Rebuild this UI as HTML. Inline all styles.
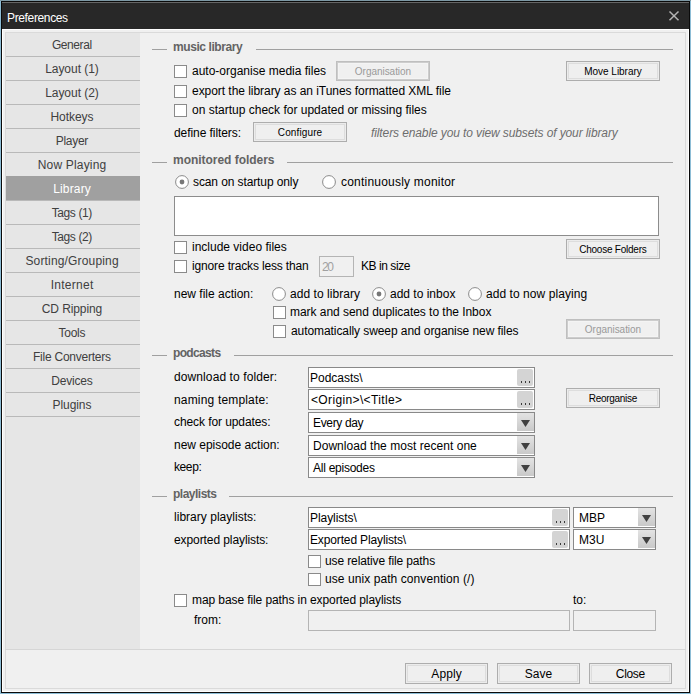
<!DOCTYPE html>
<html><head><meta charset="utf-8"><style>
html,body{margin:0;padding:0;width:691px;height:694px;overflow:hidden;}
body{position:relative;font-family:'Liberation Sans', sans-serif;}
body>div, body>svg{position:absolute;box-sizing:border-box;}
.t{white-space:pre;line-height:14px;font-family:'Liberation Sans', sans-serif;}
</style></head><body>
<div style="left:0px;top:0px;width:691px;height:694px;background:#8dbdd6;"></div>
<div style="left:0px;top:0px;width:691px;height:1px;background:#7d98a4;"></div>
<div style="left:1px;top:1px;width:689px;height:692px;background:#0a0a0a;"></div>
<div style="left:2px;top:2px;width:687px;height:27px;background:#282828;"></div>
<div style="left:2px;top:2px;width:687px;height:1px;background:#666;"></div>
<div style="left:2px;top:29px;width:687px;height:663px;background:#fff;"></div>
<div style="left:3px;top:30px;width:685px;height:661px;background:#f0f0f0;"></div>
<div style="left:5px;top:32px;width:681px;height:657px;box-shadow:inset 0 0 0 1px #dadada;"></div>
<div style="left:5px;top:649px;width:681px;height:1px;background:#d6d6d6;"></div>
<div class="t" style="left:7px;top:11px;font-size:12px;color:#fff;letter-spacing:-0.360px;">Preferences</div>
<svg style="position:absolute;left:668px;top:10px" width="12" height="12"><path d="M1.5 1.5L10.5 10.2M10.5 1.5L1.5 10.2" stroke="#b4b4b4" stroke-width="1.5"/></svg>
<div style="left:6px;top:33px;width:134px;height:616px;background:#e6e6e6;"></div>
<div style="left:6px;top:56px;width:134px;height:1px;background:#b9b9b9;"></div>
<div class="t" style="left:7px;width:130px;text-align:center;top:38px;font-size:12px;color:#404040;letter-spacing:-0.433px;text-indent:-0.433px;">General</div>
<div style="left:6px;top:80px;width:134px;height:1px;background:#b9b9b9;"></div>
<div class="t" style="left:7px;width:130px;text-align:center;top:62px;font-size:12px;color:#404040;letter-spacing:-0.033px;text-indent:-0.033px;">Layout (1)</div>
<div style="left:6px;top:104px;width:134px;height:1px;background:#b9b9b9;"></div>
<div class="t" style="left:7px;width:130px;text-align:center;top:86px;font-size:12px;color:#404040;letter-spacing:-0.033px;text-indent:-0.033px;">Layout (2)</div>
<div style="left:6px;top:128px;width:134px;height:1px;background:#b9b9b9;"></div>
<div class="t" style="left:7px;width:130px;text-align:center;top:110px;font-size:12px;color:#404040;letter-spacing:-0.067px;text-indent:-0.067px;">Hotkeys</div>
<div style="left:6px;top:152px;width:134px;height:1px;background:#b9b9b9;"></div>
<div class="t" style="left:7px;width:130px;text-align:center;top:134px;font-size:12px;color:#404040;letter-spacing:-0.260px;text-indent:-0.260px;">Player</div>
<div style="left:6px;top:176px;width:134px;height:1px;background:#b9b9b9;"></div>
<div class="t" style="left:7px;width:130px;text-align:center;top:158px;font-size:12px;color:#404040;letter-spacing:0.180px;text-indent:0.180px;">Now Playing</div>
<div style="left:6px;top:176px;width:134px;height:24px;background:#a0a0a0;"></div>
<div style="left:6px;top:200px;width:134px;height:1px;background:#b9b9b9;"></div>
<div class="t" style="left:7px;width:130px;text-align:center;top:182px;font-size:12px;color:#fff;letter-spacing:0.167px;text-indent:0.167px;">Library</div>
<div style="left:6px;top:224px;width:134px;height:1px;background:#b9b9b9;"></div>
<div class="t" style="left:7px;width:130px;text-align:center;top:206px;font-size:12px;color:#404040;letter-spacing:-0.386px;text-indent:-0.386px;">Tags (1)</div>
<div style="left:6px;top:248px;width:134px;height:1px;background:#b9b9b9;"></div>
<div class="t" style="left:7px;width:130px;text-align:center;top:230px;font-size:12px;color:#404040;letter-spacing:-0.386px;text-indent:-0.386px;">Tags (2)</div>
<div style="left:6px;top:272px;width:134px;height:1px;background:#b9b9b9;"></div>
<div class="t" style="left:7px;width:130px;text-align:center;top:254px;font-size:12px;color:#404040;letter-spacing:0.167px;text-indent:0.167px;">Sorting/Grouping</div>
<div style="left:6px;top:296px;width:134px;height:1px;background:#b9b9b9;"></div>
<div class="t" style="left:7px;width:130px;text-align:center;top:278px;font-size:12px;color:#404040;letter-spacing:0.286px;text-indent:0.286px;">Internet</div>
<div style="left:6px;top:320px;width:134px;height:1px;background:#b9b9b9;"></div>
<div class="t" style="left:7px;width:130px;text-align:center;top:302px;font-size:12px;color:#404040;letter-spacing:-0.111px;text-indent:-0.111px;">CD Ripping</div>
<div style="left:6px;top:344px;width:134px;height:1px;background:#b9b9b9;"></div>
<div class="t" style="left:7px;width:130px;text-align:center;top:326px;font-size:12px;color:#404040;letter-spacing:-0.250px;text-indent:-0.250px;">Tools</div>
<div style="left:6px;top:368px;width:134px;height:1px;background:#b9b9b9;"></div>
<div class="t" style="left:7px;width:130px;text-align:center;top:350px;font-size:12px;color:#404040;letter-spacing:-0.243px;text-indent:-0.243px;">File Converters</div>
<div style="left:6px;top:392px;width:134px;height:1px;background:#b9b9b9;"></div>
<div class="t" style="left:7px;width:130px;text-align:center;top:374px;font-size:12px;color:#404040;letter-spacing:-0.233px;text-indent:-0.233px;">Devices</div>
<div style="left:6px;top:416px;width:134px;height:1px;background:#b9b9b9;"></div>
<div class="t" style="left:7px;width:130px;text-align:center;top:398px;font-size:12px;color:#404040;letter-spacing:-0.067px;text-indent:-0.067px;">Plugins</div>
<div style="left:152px;top:49px;width:15px;height:1px;background:#a0a0a0;"></div>
<div class="t" style="left:173px;top:40px;font-size:12px;color:#636363;font-weight:bold;letter-spacing:-0.417px;">music library</div>
<div style="left:256px;top:49px;width:417px;height:1px;background:#a0a0a0;"></div>
<div style="left:174px;top:65px;width:13px;height:13px;background:#fff;box-shadow:inset 0 0 0 1px #8a8a8a;"></div>
<div class="t" style="left:192px;top:64px;font-size:12px;color:#000;">auto-organise media files</div>
<div style="left:336px;top:61px;width:94px;height:20px;background:#f0f0f0;box-shadow:inset 0 0 0 1px #bfbfbf, inset 0 0 0 2px #cdcdcd, inset 0 0 0 3px #f4f4f4;"></div>
<div class="t" style="left:336px;width:94px;text-align:center;top:65px;font-size:10px;color:#9a9a9a;letter-spacing:-0.036px;text-indent:-0.036px;">Organisation</div>
<div style="left:566px;top:61px;width:94px;height:20px;background:#efefef;box-shadow:inset 0 0 0 1px #adadad, inset 0 0 0 2px #ececec, inset 0 0 0 3px #dddddd;"></div>
<div class="t" style="left:566px;width:94px;text-align:center;top:65px;font-size:10px;color:#000;letter-spacing:-0.027px;text-indent:-0.027px;">Move Library</div>
<div style="left:174px;top:85px;width:13px;height:13px;background:#fff;box-shadow:inset 0 0 0 1px #8a8a8a;"></div>
<div class="t" style="left:192px;top:84px;font-size:12px;color:#000;letter-spacing:-0.047px;">export the library as an iTunes formatted XML file</div>
<div style="left:174px;top:104px;width:13px;height:13px;background:#fff;box-shadow:inset 0 0 0 1px #8a8a8a;"></div>
<div class="t" style="left:192px;top:103px;font-size:12px;color:#000;">on startup check for updated or missing files</div>
<div class="t" style="left:174px;top:126px;font-size:12px;color:#000;letter-spacing:-0.071px;">define filters:</div>
<div style="left:253px;top:122px;width:94px;height:20px;background:#efefef;box-shadow:inset 0 0 0 1px #adadad, inset 0 0 0 2px #ececec, inset 0 0 0 3px #dddddd;"></div>
<div class="t" style="left:253px;width:94px;text-align:center;top:126px;font-size:10px;color:#000;letter-spacing:0.125px;text-indent:0.125px;">Configure</div>
<div class="t" style="left:371px;top:126px;font-size:12px;color:#6d6d6d;font-style:italic;letter-spacing:-0.108px;">filters enable you to view subsets of your library</div>
<div style="left:152px;top:162px;width:15px;height:1px;background:#a0a0a0;"></div>
<div class="t" style="left:173px;top:153px;font-size:12px;color:#636363;font-weight:bold;letter-spacing:-0.031px;">monitored folders</div>
<div style="left:287px;top:162px;width:386px;height:1px;background:#a0a0a0;"></div>
<svg style="position:absolute;left:175px;top:175px" width="14" height="14"><circle cx="7" cy="7" r="6.4" fill="#fff" stroke="#8a8a8a" stroke-width="1"/><circle cx="7" cy="7" r="2.4" fill="#777"/></svg>
<div class="t" style="left:193px;top:175px;font-size:12px;color:#000;letter-spacing:-0.105px;">scan on startup only</div>
<svg style="position:absolute;left:322px;top:175px" width="14" height="14"><circle cx="7" cy="7" r="6.4" fill="#fff" stroke="#8a8a8a" stroke-width="1"/></svg>
<div class="t" style="left:341px;top:175px;font-size:12px;color:#000;letter-spacing:0.211px;">continuously monitor</div>
<div style="left:174px;top:196px;width:485px;height:40px;background:#fff;box-shadow:inset 0 0 0 1px #8c8c8c;"></div>
<div style="left:174px;top:241px;width:13px;height:13px;background:#fff;box-shadow:inset 0 0 0 1px #8a8a8a;"></div>
<div class="t" style="left:192px;top:240px;font-size:12px;color:#000;">include video files</div>
<div style="left:566px;top:239px;width:94px;height:20px;background:#efefef;box-shadow:inset 0 0 0 1px #adadad, inset 0 0 0 2px #ececec, inset 0 0 0 3px #dddddd;"></div>
<div class="t" style="left:566px;width:94px;text-align:center;top:243px;font-size:10px;color:#000;letter-spacing:-0.231px;text-indent:-0.231px;">Choose Folders</div>
<div style="left:174px;top:260px;width:13px;height:13px;background:#fff;box-shadow:inset 0 0 0 1px #8a8a8a;"></div>
<div class="t" style="left:192px;top:259px;font-size:12px;color:#000;letter-spacing:-0.150px;">ignore tracks less than</div>
<div style="left:319px;top:256px;width:35px;height:21px;background:#f0f0f0;box-shadow:inset 0 0 0 1px #b4b4b4;"></div>
<div class="t" style="left:322px;top:260px;font-size:12px;color:#a0a0a0;letter-spacing:-1.400px;">20</div>
<div class="t" style="left:361px;top:259px;font-size:12px;color:#000;letter-spacing:-0.444px;">KB in size</div>
<div class="t" style="left:174px;top:287px;font-size:12px;color:#000;">new file action:</div>
<svg style="position:absolute;left:272px;top:287px" width="14" height="14"><circle cx="7" cy="7" r="6.4" fill="#fff" stroke="#8a8a8a" stroke-width="1"/></svg>
<div class="t" style="left:290px;top:287px;font-size:12px;color:#000;letter-spacing:0.046px;">add to library</div>
<svg style="position:absolute;left:372px;top:287px" width="14" height="14"><circle cx="7" cy="7" r="6.4" fill="#fff" stroke="#8a8a8a" stroke-width="1"/><circle cx="7" cy="7" r="2.4" fill="#777"/></svg>
<div class="t" style="left:390px;top:287px;font-size:12px;color:#000;">add to inbox</div>
<svg style="position:absolute;left:468px;top:287px" width="14" height="14"><circle cx="7" cy="7" r="6.4" fill="#fff" stroke="#8a8a8a" stroke-width="1"/></svg>
<div class="t" style="left:486px;top:287px;font-size:12px;color:#000;letter-spacing:0.059px;">add to now playing</div>
<div style="left:273px;top:306px;width:13px;height:13px;background:#fff;box-shadow:inset 0 0 0 1px #8a8a8a;"></div>
<div class="t" style="left:290px;top:305px;font-size:12px;color:#000;letter-spacing:-0.039px;">mark and send duplicates to the Inbox</div>
<div style="left:273px;top:325px;width:13px;height:13px;background:#fff;box-shadow:inset 0 0 0 1px #8a8a8a;"></div>
<div class="t" style="left:291px;top:324px;font-size:12px;color:#000;letter-spacing:-0.080px;">automatically sweep and organise new files</div>
<div style="left:566px;top:319px;width:94px;height:20px;background:#f0f0f0;box-shadow:inset 0 0 0 1px #bfbfbf, inset 0 0 0 2px #cdcdcd, inset 0 0 0 3px #f4f4f4;"></div>
<div class="t" style="left:566px;width:94px;text-align:center;top:323px;font-size:10px;color:#9a9a9a;letter-spacing:-0.036px;text-indent:-0.036px;">Organisation</div>
<div style="left:152px;top:355px;width:15px;height:1px;background:#a0a0a0;"></div>
<div class="t" style="left:173px;top:346px;font-size:12px;color:#636363;font-weight:bold;letter-spacing:-0.657px;">podcasts</div>
<div style="left:234px;top:355px;width:439px;height:1px;background:#a0a0a0;"></div>
<div class="t" style="left:174px;top:370px;font-size:12px;color:#000;letter-spacing:0.100px;">download to folder:</div>
<div style="left:308px;top:367px;width:227px;height:21px;background:#fff;box-shadow:inset 0 0 0 1px #898989;"></div>
<div style="left:517px;top:369px;width:16px;height:17px;background:#d4d4d4;border-radius:2px;"></div>
<div style="left:521px;top:381px;width:1px;height:2px;background:#3a3a3a;"></div>
<div style="left:525px;top:381px;width:1px;height:2px;background:#3a3a3a;"></div>
<div style="left:529px;top:381px;width:1px;height:2px;background:#3a3a3a;"></div>
<div class="t" style="left:310px;top:371px;font-size:12px;color:#000;">Podcasts\</div>
<div class="t" style="left:174px;top:393px;font-size:12px;color:#000;letter-spacing:0.173px;">naming template:</div>
<div style="left:308px;top:389px;width:227px;height:21px;background:#fff;box-shadow:inset 0 0 0 1px #898989;"></div>
<div style="left:517px;top:391px;width:16px;height:17px;background:#d4d4d4;border-radius:2px;"></div>
<div style="left:521px;top:403px;width:1px;height:2px;background:#3a3a3a;"></div>
<div style="left:525px;top:403px;width:1px;height:2px;background:#3a3a3a;"></div>
<div style="left:529px;top:403px;width:1px;height:2px;background:#3a3a3a;"></div>
<div class="t" style="left:311px;top:393px;font-size:12px;color:#000;letter-spacing:0.360px;">&lt;Origin&gt;\&lt;Title&gt;</div>
<div style="left:566px;top:388px;width:94px;height:20px;background:#efefef;box-shadow:inset 0 0 0 1px #adadad, inset 0 0 0 2px #ececec, inset 0 0 0 3px #dddddd;"></div>
<div class="t" style="left:566px;width:94px;text-align:center;top:392px;font-size:10px;color:#000;letter-spacing:-0.300px;text-indent:-0.300px;">Reorganise</div>
<div class="t" style="left:174px;top:415px;font-size:12px;color:#000;letter-spacing:-0.088px;">check for updates:</div>
<div style="left:308px;top:412px;width:227px;height:21px;background:#fff;box-shadow:inset 0 0 0 1px #898989;"></div>
<div style="left:517px;top:413px;width:17px;height:18px;background:linear-gradient(#e3e3e3,#c9c9c9);"></div>
<svg style="position:absolute;left:521px;top:420px" width="9" height="7"><path d="M0 0H9L4.5 7Z" fill="#404040"/></svg>
<div class="t" style="left:313px;top:416px;font-size:12px;color:#000;letter-spacing:-0.350px;">Every day</div>
<div class="t" style="left:174px;top:438px;font-size:12px;color:#000;letter-spacing:-0.022px;">new episode action:</div>
<div style="left:308px;top:435px;width:227px;height:21px;background:#fff;box-shadow:inset 0 0 0 1px #898989;"></div>
<div style="left:517px;top:436px;width:17px;height:18px;background:linear-gradient(#e3e3e3,#c9c9c9);"></div>
<svg style="position:absolute;left:521px;top:443px" width="9" height="7"><path d="M0 0H9L4.5 7Z" fill="#404040"/></svg>
<div class="t" style="left:313px;top:439px;font-size:12px;color:#000;letter-spacing:0.037px;">Download the most recent one</div>
<div class="t" style="left:174px;top:460px;font-size:12px;color:#000;letter-spacing:-0.400px;">keep:</div>
<div style="left:308px;top:457px;width:227px;height:21px;background:#fff;box-shadow:inset 0 0 0 1px #898989;"></div>
<div style="left:517px;top:458px;width:17px;height:18px;background:linear-gradient(#e3e3e3,#c9c9c9);"></div>
<svg style="position:absolute;left:521px;top:465px" width="9" height="7"><path d="M0 0H9L4.5 7Z" fill="#404040"/></svg>
<div class="t" style="left:313px;top:461px;font-size:12px;color:#000;letter-spacing:-0.255px;">All episodes</div>
<div style="left:152px;top:496px;width:15px;height:1px;background:#a0a0a0;"></div>
<div class="t" style="left:173px;top:487px;font-size:12px;color:#636363;font-weight:bold;letter-spacing:-0.500px;">playlists</div>
<div style="left:229px;top:496px;width:444px;height:1px;background:#a0a0a0;"></div>
<div class="t" style="left:174px;top:510px;font-size:12px;color:#000;letter-spacing:0.024px;">library playlists:</div>
<div style="left:308px;top:507px;width:262px;height:21px;background:#fff;box-shadow:inset 0 0 0 1px #898989;"></div>
<div style="left:552px;top:509px;width:16px;height:17px;background:#d4d4d4;border-radius:2px;"></div>
<div style="left:556px;top:521px;width:1px;height:2px;background:#3a3a3a;"></div>
<div style="left:560px;top:521px;width:1px;height:2px;background:#3a3a3a;"></div>
<div style="left:564px;top:521px;width:1px;height:2px;background:#3a3a3a;"></div>
<div class="t" style="left:310px;top:511px;font-size:12px;color:#000;letter-spacing:-0.056px;">Playlists\</div>
<div style="left:573px;top:507px;width:83px;height:21px;background:#fff;box-shadow:inset 0 0 0 1px #898989;"></div>
<div style="left:638px;top:508px;width:17px;height:18px;background:linear-gradient(#e3e3e3,#c9c9c9);"></div>
<svg style="position:absolute;left:642px;top:515px" width="9" height="7"><path d="M0 0H9L4.5 7Z" fill="#404040"/></svg>
<div class="t" style="left:579px;top:511px;font-size:12px;color:#000;">MBP</div>
<div class="t" style="left:174px;top:533px;font-size:12px;color:#000;letter-spacing:-0.089px;">exported playlists:</div>
<div style="left:308px;top:529px;width:262px;height:21px;background:#fff;box-shadow:inset 0 0 0 1px #898989;"></div>
<div style="left:552px;top:531px;width:16px;height:17px;background:#d4d4d4;border-radius:2px;"></div>
<div style="left:556px;top:543px;width:1px;height:2px;background:#3a3a3a;"></div>
<div style="left:560px;top:543px;width:1px;height:2px;background:#3a3a3a;"></div>
<div style="left:564px;top:543px;width:1px;height:2px;background:#3a3a3a;"></div>
<div class="t" style="left:310px;top:533px;font-size:12px;color:#000;letter-spacing:-0.139px;">Exported Playlists\</div>
<div style="left:573px;top:529px;width:83px;height:21px;background:#fff;box-shadow:inset 0 0 0 1px #898989;"></div>
<div style="left:638px;top:530px;width:17px;height:18px;background:linear-gradient(#e3e3e3,#c9c9c9);"></div>
<svg style="position:absolute;left:642px;top:537px" width="9" height="7"><path d="M0 0H9L4.5 7Z" fill="#404040"/></svg>
<div class="t" style="left:579px;top:533px;font-size:12px;color:#000;">M3U</div>
<div style="left:308px;top:555px;width:13px;height:13px;background:#fff;box-shadow:inset 0 0 0 1px #8a8a8a;"></div>
<div class="t" style="left:325px;top:554px;font-size:12px;color:#000;letter-spacing:-0.118px;">use relative file paths</div>
<div style="left:308px;top:573px;width:13px;height:13px;background:#fff;box-shadow:inset 0 0 0 1px #8a8a8a;"></div>
<div class="t" style="left:325px;top:572px;font-size:12px;color:#000;letter-spacing:0.074px;">use unix path convention (/)</div>
<div style="left:174px;top:594px;width:13px;height:13px;background:#fff;box-shadow:inset 0 0 0 1px #8a8a8a;"></div>
<div class="t" style="left:192px;top:593px;font-size:12px;color:#000;letter-spacing:-0.090px;">map base file paths in exported playlists</div>
<div class="t" style="left:573px;top:593px;font-size:12px;color:#000;">to:</div>
<div class="t" style="left:194px;top:613px;font-size:12px;color:#000;">from:</div>
<div style="left:308px;top:610px;width:262px;height:21px;background:#f0f0f0;box-shadow:inset 0 0 0 1px #b4b4b4;"></div>
<div style="left:573px;top:610px;width:83px;height:21px;background:#f0f0f0;box-shadow:inset 0 0 0 1px #b4b4b4;"></div>
<div style="left:405px;top:663px;width:83px;height:21px;background:#efefef;box-shadow:inset 0 0 0 1px #adadad, inset 0 0 0 2px #ececec, inset 0 0 0 3px #dddddd;"></div>
<div class="t" style="left:405px;width:83px;text-align:center;top:667px;font-size:12px;color:#000;letter-spacing:0.100px;text-indent:0.100px;">Apply</div>
<div style="left:497px;top:663px;width:83px;height:21px;background:#efefef;box-shadow:inset 0 0 0 1px #adadad, inset 0 0 0 2px #ececec, inset 0 0 0 3px #dddddd;"></div>
<div class="t" style="left:497px;width:83px;text-align:center;top:667px;font-size:12px;color:#000;">Save</div>
<div style="left:589px;top:663px;width:83px;height:21px;background:#efefef;box-shadow:inset 0 0 0 1px #adadad, inset 0 0 0 2px #ececec, inset 0 0 0 3px #dddddd;"></div>
<div class="t" style="left:589px;width:83px;text-align:center;top:667px;font-size:12px;color:#000;letter-spacing:-0.350px;text-indent:-0.350px;">Close</div>
</body></html>
